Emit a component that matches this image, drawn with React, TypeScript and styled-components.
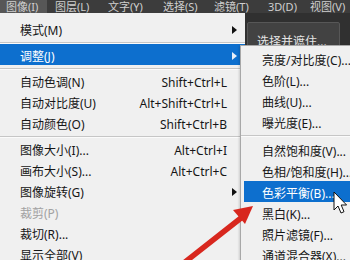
import React from 'react';
import styled, { createGlobalStyle } from 'styled-components';

const GlobalStyle = createGlobalStyle`
  html, body {
    margin: 0;
    padding: 0;
    background: #f0f0f0;
    overflow: hidden;
  }
  body {
    font-family: "Noto Sans", "Noto Sans CJK SC", sans-serif;
  }
`;

// 전체 화면
const Page = styled.div`
  position: relative;
  width: 350px;
  height: 260px;
  overflow: hidden;
  background: #f0f0f0;
`;

const MenuBar = styled.div`
  display: flex;
  height: 13px;
  background: #3c3c3c;
  overflow: hidden;
`;

const BarItem = styled.div<{ $active?: boolean; $w: number }>`
  flex: none;
  box-sizing: border-box;
  width: ${(p) => p.$w}px;
  padding-left: 6px;
  height: 13px;
  line-height: 13px;
  font-size: 11px;
  color: #cfcfcf;
  white-space: nowrap;
  background: ${(p) => (p.$active ? '#575757' : 'transparent')};
  background-clip: content-box;
  padding-right: ${(p) => (p.$active ? '0' : '0')};
`;

const ActiveTab = styled.span`
  display: block;
  margin-left: -6px;
  padding-left: 6px;
  width: 41px;
  background: #575757;
`;

const Body = styled.div`
  display: flex;
  height: 247px;
`;

const Dropdown = styled.div`
  flex: none;
  width: 245px;
  padding-top: 5px;
  display: flex;
  flex-direction: column;
  background: #f0f0f0;
`;

const Row = styled.div<{ $active?: boolean; $disabled?: boolean; $pl?: number }>`
  display: grid;
  grid-template-columns: 1fr auto 12px;
  align-items: center;
  height: 21px;
  padding: 0 6px 0 ${(p) => p.$pl ?? 20}px;
  font-size: 12px;
  line-height: 21px;
  white-space: nowrap;
  color: ${(p) => (p.$active ? '#ffffff' : p.$disabled ? '#a2a2a2' : '#161616')};
  background: ${(p) => (p.$active ? '#0d6fce' : 'transparent')};

  & > span {
    padding-top: 2px;
  }
`;

const Shortcut = styled.span`
  text-align: right;
`;

const ArrowCell = styled.div`
  display: flex;
  justify-content: flex-end;
  padding-right: 2px;
`;

const Tri = styled.div<{ $light?: boolean }>`
  width: 0;
  height: 0;
  border-top: 4px solid transparent;
  border-bottom: 4px solid transparent;
  border-left: 5px solid ${(p) => (p.$light ? '#e8eef8' : '#111')};
`;

const Sep = styled.div`
  height: 8px;
  display: flex;
  flex-direction: column;
  padding-top: 3px;
  box-sizing: border-box;

  &::before {
    content: '';
    height: 1px;
    background: #c6c6c6;
  }
  &::after {
    content: '';
    height: 1px;
    background: #fbfbfb;
  }
`;

const Options = styled.div`
  flex: 1;
  background: #303030;
  padding: 9px 0 0 2px;
`;

const MaskButton = styled.div`
  width: 93px;
  height: 30px;
  box-sizing: border-box;
  padding: 9px 0 0 9px;
  background: #424242;
  border: 1px solid #575757;
  border-radius: 2px;
  color: #e4e4e4;
  font-size: 12px;
  white-space: nowrap;
`;

// 하위 메뉴 (겹쳐 보이는 팝업)
const SubMenu = styled.div`
  position: absolute;
  left: 240px;
  top: 45px;
  right: -30px;
  bottom: -40px;
  background: #f0f0f0;
  border: 1px solid #a8a8a8;
  padding: 2px 3px 0 3px;
  display: flex;
  flex-direction: column;
  box-shadow: -1px 1px 2px rgba(0, 0, 0, 0.15);
`;

const SubSep = styled(Sep)`
  height: 7px;
  margin-left: -3px;
`;

const Overlay = styled.svg`
  position: absolute;
  left: 0;
  top: 0;
  pointer-events: none;
`;

type Item =
  | { sep: true }
  | { label: string; shortcut?: string; arrow?: boolean; active?: boolean; disabled?: boolean };

const mainItems: Item[] = [
  { label: '模式(M)', arrow: true },
  { sep: true },
  { label: '调整(J)', arrow: true, active: true },
  { sep: true },
  { label: '自动色调(N)', shortcut: 'Shift+Ctrl+L' },
  { label: '自动对比度(U)', shortcut: 'Alt+Shift+Ctrl+L' },
  { label: '自动颜色(O)', shortcut: 'Shift+Ctrl+B' },
  { sep: true },
  { label: '图像大小(I)...', shortcut: 'Alt+Ctrl+I' },
  { label: '画布大小(S)...', shortcut: 'Alt+Ctrl+C' },
  { label: '图像旋转(G)', arrow: true },
  { label: '裁剪(P)', disabled: true },
  { label: '裁切(R)...' },
  { label: '显示全部(V)' },
];

const subItems: Item[] = [
  { label: '亮度/对比度(C)...' },
  { label: '色阶(L)...' },
  { label: '曲线(U)...' },
  { label: '曝光度(E)...' },
  { sep: true },
  { label: '自然饱和度(V)...' },
  { label: '色相/饱和度(H)...' },
  { label: '色彩平衡(B)...', active: true },
  { label: '黑白(K)...' },
  { label: '照片滤镜(F)...' },
  { label: '通道混合器(X)...' },
];

const bar = [
  { t: '图像(I)', w: 49 },
  { t: '图层(L)', w: 53 },
  { t: '文字(Y)', w: 55 },
  { t: '选择(S)', w: 51 },
  { t: '滤镜(T)', w: 54 },
  { t: '3D(D)', w: 42 },
  { t: '视图(V)', w: 50 },
];

const App = () => {
  return (
    <>
      <GlobalStyle />
      <Page>
        <MenuBar>
          {bar.map((b, i) => (
            <BarItem key={b.t} $w={b.w}>
              {i === 0 ? <ActiveTab>{b.t}</ActiveTab> : b.t}
            </BarItem>
          ))}
        </MenuBar>
        <Body>
          <Dropdown>
            {mainItems.map((it, i) =>
              'sep' in it ? (
                <Sep key={i} />
              ) : (
                <Row key={i} $active={it.active} $disabled={it.disabled}>
                  <span>{it.label}</span>
                  <Shortcut>{it.shortcut}</Shortcut>
                  <ArrowCell>{it.arrow && <Tri $light={it.active} />}</ArrowCell>
                </Row>
              )
            )}
          </Dropdown>
          <Options>
            <MaskButton>选择并遮住...</MaskButton>
          </Options>
        </Body>
        <SubMenu>
          {subItems.map((it, i) =>
            'sep' in it ? (
              <SubSep key={i} />
            ) : (
              <Row key={i} $active={it.active} $pl={18}>
                <span>{it.label}</span>
                <Shortcut />
                <ArrowCell />
              </Row>
            )
          )}
        </SubMenu>
        <Overlay width="350" height="260" viewBox="0 0 350 260">
          {/* 빨간 화살표 */}
          <line x1="180" y1="266" x2="241" y2="218" stroke="#d8271e" strokeWidth="5.5" strokeLinecap="round" />
          <polygon points="253,206 245,224 233,210" fill="#d8271e" />
          {/* 마우스 커서 */}
          <path
            d="M334 192 L334 210 L338 206 L341 213 L344 211.7 L341.2 205 L346.6 205 Z"
            fill="#ffffff"
            stroke="#111"
            strokeWidth="1"
            strokeLinejoin="round"
          />
        </Overlay>
      </Page>
    </>
  );
};

export default App;
